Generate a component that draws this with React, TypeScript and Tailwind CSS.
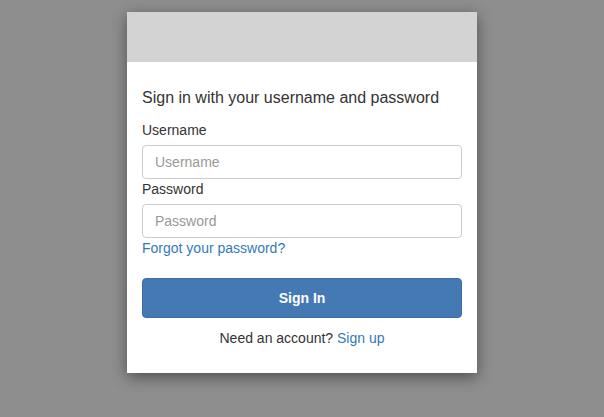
export default function App() {
  return (
    <div className="min-h-screen bg-[#8e8e8e] pt-3 font-['Liberation_Sans',Arial,sans-serif] text-[#333]">
      <div className="mx-auto w-[350px] bg-white shadow-[0_4px_14px_rgba(0,0,0,0.45)]">
        {/* Banner */}
        <div className="h-[50px] bg-[#d3d3d3]"></div>

        <div className="px-[15px] pt-[25px] pb-[25px]">
          <h3 className="text-[16px] leading-[22px] mb-[11px]">Sign in with your username and password</h3>

          <label className="block text-[14px] leading-[20px] mb-[5px]">Username</label>
          <input
            type="text"
            placeholder="Username"
            className="block w-full h-[34px] px-3 border border-[#ccc] rounded-[4px] text-[14px] placeholder:text-[#999] outline-none"
          />

          <label className="block text-[14px] leading-[20px] mb-[5px]">Password</label>
          <input
            type="password"
            placeholder="Password"
            className="block w-full h-[34px] px-3 border border-[#ccc] rounded-[4px] text-[14px] placeholder:text-[#999] outline-none"
          />

          <a href="#" className="block text-[14px] leading-[20px] text-[#337ab7]">Forgot your password?</a>

          <button className="mt-5 w-full h-[40px] rounded-[4px] bg-[#4579b4] border border-[#3c6da6] text-white text-[14px] font-bold">
            Sign In
          </button>

          <p className="mt-[10px] text-center text-[14px] leading-[20px]">
            Need an account? <a href="#" className="text-[#337ab7]">Sign up</a>
          </p>
        </div>
      </div>
    </div>
  );
}
